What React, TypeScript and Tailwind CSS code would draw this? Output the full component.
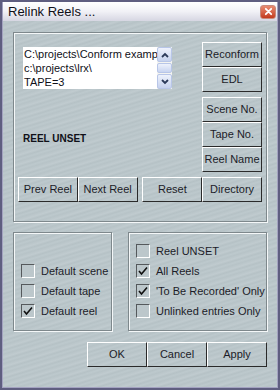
import React from 'react';

const metal =
  'bg-[#b8c4c8] bg-[repeating-linear-gradient(163deg,#b5c1c5_0px,#bdc9cd_2px,#b7c3c7_4px,#c0cbcf_7px,#b6c2c6_9px)]';

const Btn: React.FC<{ label: string; className?: string }> = ({ label, className }) => (
  <button
    className={`h-[25px] w-[60px] border border-t-white border-l-white border-r-[#2a2a2a] border-b-[#2a2a2a] text-[11px] text-[#1c1c28] ${metal} ${className ?? ''}`}
  >
    {label}
  </button>
);

const Check: React.FC<{ label: string; checked?: boolean }> = ({ label, checked }) => (
  <div className="flex h-[20px] items-center gap-[6px]">
    <div className="relative h-[14px] w-[14px] border border-t-[#55595c] border-l-[#55595c] border-r-white border-b-white bg-[#bcc7cb]">
      {checked && (
        <svg viewBox="0 0 12 12" className="absolute left-0 top-0 h-[12px] w-[12px]">
          <path d="M2 6 L4.5 9 L10 2.5" fill="none" stroke="#111" strokeWidth="1.6" />
        </svg>
      )}
    </div>
    <span className="whitespace-nowrap text-[11px] text-[#1c1c28]">{label}</span>
  </div>
);

const groupCls = 'border border-[#7e888c] shadow-[1px_1px_0_#f4f7f8,inset_1px_1px_0_#f4f7f8]';

export default function App() {
  return (
    <div className="h-[390px] w-[280px] border-2 border-[#5f5e80] bg-[#5f5e80] font-['Liberation_Sans',Arial,sans-serif]">
      <div className={`flex h-full flex-col border border-t-0 border-[#a3a2c0] ${metal}`}>
        <div className="flex h-[19px] items-center justify-between bg-gradient-to-b from-[#ffffff] via-[#f1f1f6] to-[#d6d6e2] pl-[5px] pr-[1px]">
          <span className="text-[13px] leading-none text-[#101018]">Relink Reels ...</span>
          <div className="flex h-[14px] w-[16px] items-center justify-center rounded-[3px] border border-[#c98a7a] bg-gradient-to-b from-[#e88a70] to-[#c2391c]">
            <svg viewBox="0 0 10 10" className="h-[9px] w-[9px]">
              <path d="M2 2 L8 8 M8 2 L2 8" stroke="#fff" strokeWidth="2" strokeLinecap="round" />
            </svg>
          </div>
        </div>

        <div className="flex flex-1 flex-col px-[10px] pt-[11px]">
          {/* top group */}
          <div className={`h-[190px] w-[254px] ${groupCls} flex flex-col px-[4px] pt-[9px]`}>
            <div className="flex">
              <div className="flex-1 pl-[5px] pt-[5px]">
                <div className="flex h-[42px] w-[149px]">
                  <div className="w-[134px] overflow-hidden bg-white pl-[1px] text-[11px] leading-[14px] text-[#101018]">
                    <div className="whitespace-nowrap">C:\projects\Conform examp</div>
                    <div className="whitespace-nowrap">c:\projects\lrx\</div>
                    <div className="whitespace-nowrap">TAPE=3</div>
                  </div>
                  <div className="flex w-[15px] flex-col bg-[#f4f4f0]">
                    <div className="flex h-[15px] items-center justify-center rounded-[2px] border border-[#b8c6e8] bg-gradient-to-b from-[#eef2fc] to-[#c6d2ee]">
                      <svg viewBox="0 0 8 6" className="h-[6px] w-[8px]">
                        <path d="M1 5 L4 2 L7 5" fill="none" stroke="#2c3a5a" strokeWidth="1.8" />
                      </svg>
                    </div>
                    <div className="mt-[1px] h-[10px] rounded-[2px] border border-[#b8c6e8] bg-gradient-to-b from-[#eef2fc] to-[#c8d4f0]" />
                    <div className="flex-1" />
                    <div className="flex h-[15px] items-center justify-center rounded-[2px] border border-[#b8c6e8] bg-gradient-to-b from-[#eef2fc] to-[#c6d2ee]">
                      <svg viewBox="0 0 8 6" className="h-[6px] w-[8px]">
                        <path d="M1 1 L4 4 L7 1" fill="none" stroke="#2c3a5a" strokeWidth="1.8" />
                      </svg>
                    </div>
                  </div>
                </div>
                <div className="mt-[44px] text-[10px] font-bold leading-[12px] text-[#101018]">REEL UNSET</div>
              </div>
              <div className="flex w-[60px] flex-col">
                <Btn label="Reconform" />
                <Btn label="EDL" />
                <div className="h-[5px]" />
                <Btn label="Scene No." />
                <Btn label="Tape No." />
                <Btn label="Reel Name" />
              </div>
            </div>
            <div className="mt-[5px] flex">
              <Btn label="Prev Reel" />
              <Btn label="Next Reel" />
              <div className="w-[5px]" />
              <Btn label="Reset" />
              <Btn label="Directory" />
            </div>
          </div>

          {/* lower groups */}
          <div className="mt-[10px] flex h-[99px] justify-between">
            <div className={`w-[99px] ${groupCls} flex flex-col justify-end pb-[9px] pl-[7px]`}>
              <Check label="Default scene" />
              <Check label="Default tape" />
              <Check label="Default reel" checked />
            </div>
            <div className={`w-[139px] ${groupCls} flex flex-col justify-end pb-[9px] pl-[7px]`}>
              <Check label="Reel UNSET" />
              <Check label="All Reels" checked />
              <Check label="'To Be Recorded' Only" checked />
              <Check label="Unlinked entries Only" />
            </div>
          </div>

          <div className="mt-[11px] flex justify-end">
            <Btn label="OK" />
            <Btn label="Cancel" />
            <Btn label="Apply" />
          </div>
        </div>
      </div>
    </div>
  );
}
